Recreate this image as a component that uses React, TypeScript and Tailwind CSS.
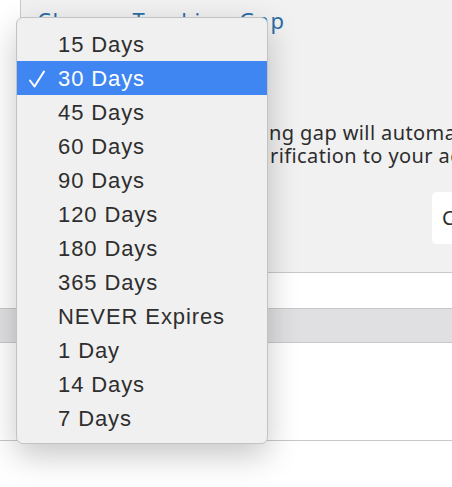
const options = [
  "15 Days",
  "30 Days",
  "45 Days",
  "60 Days",
  "90 Days",
  "120 Days",
  "180 Days",
  "365 Days",
  "NEVER Expires",
  "1 Day",
  "14 Days",
  "7 Days",
];

export default function App() {
  const selected = "30 Days";

  return (
    <div className="relative w-[452px] h-[487px] overflow-hidden bg-white">
      {/* Settings panel behind the popup */}
      <div className="ml-[20px] h-[273px] bg-[#f1f1f1] border-l border-b border-[#c9c9c9] font-['Noto_Sans',sans-serif] text-[#2d2d2d]">
        <div className="pl-[16px] pt-[5px] text-[22px] leading-[30px] tracking-[1.5px] text-[#2c6ea5] whitespace-nowrap">
          Change Tracking Gap
        </div>
        <div className="mt-[86px] text-[20px] leading-[23px] tracking-[0.4px] whitespace-nowrap">
          <div className="flex">
            <span className="w-[248px] shrink-0 overflow-hidden">Changing tracki</span>
            <span>ng gap will automatically send a</span>
          </div>
          <div className="flex">
            <span className="w-[249px] shrink-0 overflow-hidden">send a ve</span>
            <span>rification to your account.</span>
          </div>
        </div>
        <div className="flex justify-end mt-[25px]">
          <button className="w-[20px] h-[52px] bg-white rounded-l-[5px] pl-[10px] text-left text-[20px] overflow-hidden">
            C
          </button>
        </div>
      </div>

      {/* Table below */}
      <div className="h-[35px]" />
      <div className="h-[35px] bg-[#e0e0e2] border-y border-[#c8c8ca]" />
      <div className="h-[98px] border-b border-[#c8c8c8]" />

      {/* Open select menu */}
      <div className="absolute left-[16px] top-[17px] w-[252px] pt-[9px] pb-[8px] bg-[#f0f0f0] border border-[#c3c3c3] rounded-[7px] shadow-[0_12px_32px_rgba(0,0,0,0.22)] font-['Liberation_Sans',Arial,sans-serif]">
        {options.map((opt) =>
          opt === selected ? (
            <div
              key={opt}
              className="relative h-[34px] flex items-center pl-[41px] bg-[#3f86f2] text-white text-[22px] tracking-[0.9px]"
            >
              <svg
                className="absolute left-[11px] top-[9px]"
                width="18"
                height="18"
                viewBox="0 0 18 18"
                fill="none"
                stroke="currentColor"
                strokeWidth="2"
                strokeLinecap="round"
                strokeLinejoin="round"
              >
                <path d="M2 10.5 L6.5 16.5 L16 1.5" />
              </svg>
              {opt}
            </div>
          ) : (
            <div key={opt} className="h-[34px] flex items-center pl-[41px] text-[#2e2e2e] text-[22px] tracking-[0.9px]">
              {opt}
            </div>
          )
        )}
      </div>
    </div>
  );
}
